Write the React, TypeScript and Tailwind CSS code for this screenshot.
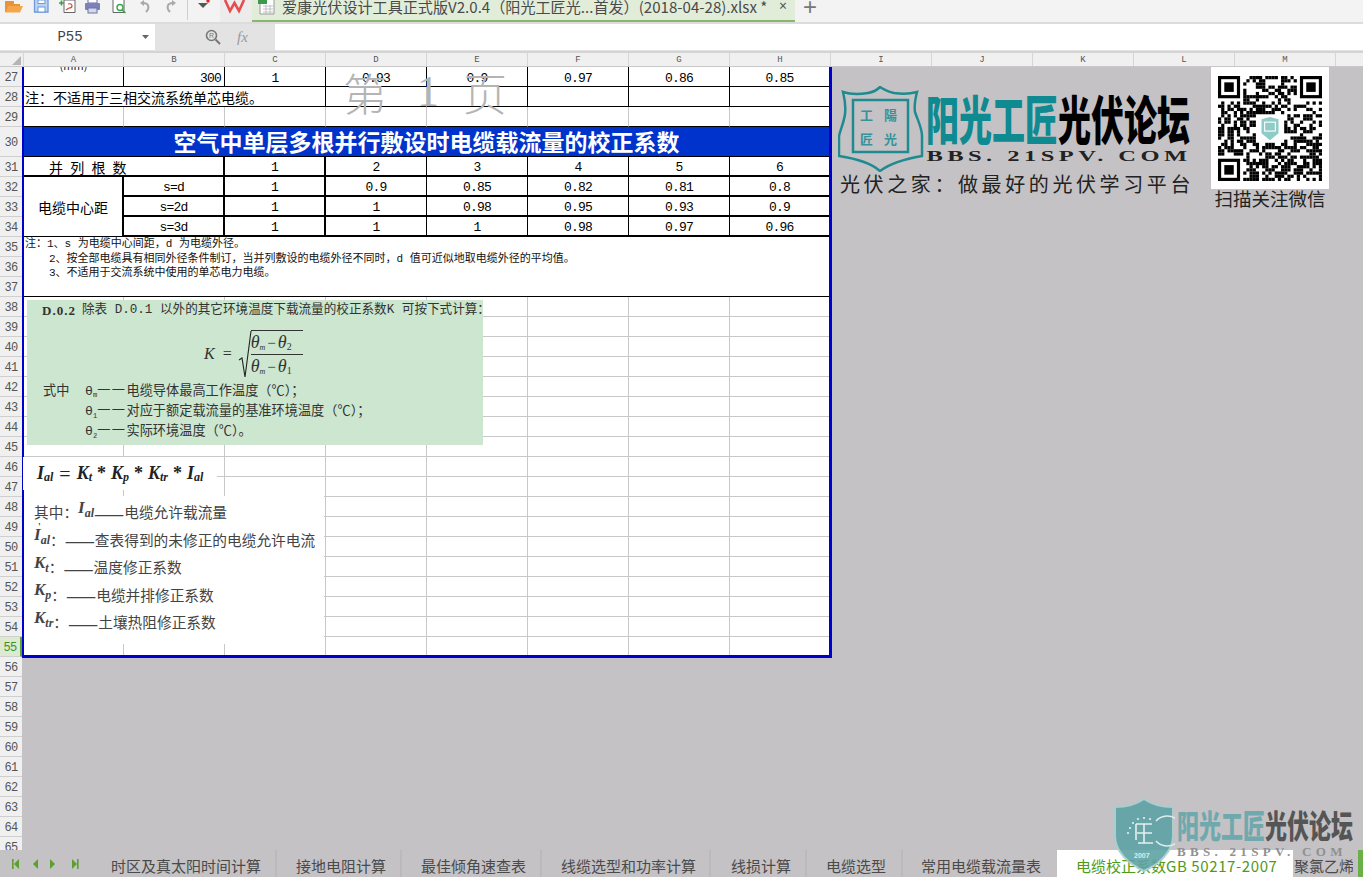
import React from "react";

const cjk = "font-['Noto_Sans_CJK_SC','Noto_Sans',sans-serif]";
const mono = "font-['Liberation_Mono','Noto_Sans_CJK_SC',monospace]";
const serif = "font-['Liberation_Serif','Noto_Sans_CJK_SC',serif]";

const colHeads = ["A", "B", "C", "D", "E", "F", "G", "H", "I", "J", "K", "L", "M", ""];
const rowHeads: number[] = [];
for (let i = 27; i <= 65; i++) rowHeads.push(i);

function QR() {
  const n = 33;
  const rects: React.ReactNode[] = [];
  let seed = 20180428;
  const rnd = () => {
    seed = (seed * 1664525 + 1013904223) >>> 0;
    return (seed >>> 16) / 65536;
  };
  const inFinder = (x: number, y: number) =>
    (x < 8 && y < 8) || (x >= n - 8 && y < 8) || (x < 8 && y >= n - 8);
  for (let y = 0; y < n; y++) {
    for (let x = 0; x < n; x++) {
      if (inFinder(x, y)) continue;
      if (x >= 12 && x <= 20 && y >= 12 && y <= 20) continue;
      if (rnd() > 0.47) rects.push(<rect key={x + "-" + y} x={x} y={y} width="1.02" height="1.02" fill="#000" />);
    }
  }
  const finder = (x: number, y: number) => (
    <g key={"f" + x + y}>
      <rect x={x} y={y} width="7" height="7" fill="#000" />
      <rect x={x + 1} y={y + 1} width="5" height="5" fill="#fff" />
      <rect x={x + 2} y={y + 2} width="3" height="3" fill="#000" />
    </g>
  );
  return (
    <svg width="104" height="105" viewBox="0 0 33 33" preserveAspectRatio="none">
      {rects}
      {finder(0, 0)}
      {finder(26, 0)}
      {finder(0, 26)}
      <path d="M13.8 13.6 L16.5 12.9 L19.2 13.6 L19.2 18 L16.5 20.2 L13.8 18 Z" fill="#8fcbc7" />
      <rect x="14.8" y="14.5" width="3.4" height="2.8" fill="none" stroke="#fff" strokeWidth="0.35" />
    </svg>
  );
}

function ShieldLogo() {
  return (
    <svg width="86" height="86" viewBox="0 0 86 86">
      <path d="M5 6 C14 9 24 8 30 7 C36 6 40 3 42 1 C45 3 50 6 56 7 C63 8 72 8 79 6 C77 14 76 20 77 26 C80 35 84 42 84 50 L84 70 C72 72 54 76 42 85 C32 76 14 72 1 70 L1 50 C3 42 6 36 7 28 C8 20 7 14 5 6 Z" fill="none" stroke="#1f8b90" strokeWidth="2.5" />
      <path d="M15 14 L70 14 L70 66 L15 66 Z" fill="none" stroke="#1f8b90" strokeWidth="2.5" />
      <text x="22" y="34" fontSize="13" fontWeight="700" fill="#35949a" fontFamily="Noto Sans CJK SC">工</text>
      <text x="46" y="34" fontSize="13" fontWeight="700" fill="#35949a" fontFamily="Noto Sans CJK SC">陽</text>
      <text x="22" y="58" fontSize="13" fontWeight="700" fill="#35949a" fontFamily="Noto Sans CJK SC">匠</text>
      <text x="46" y="58" fontSize="13" fontWeight="700" fill="#35949a" fontFamily="Noto Sans CJK SC">光</text>
    </svg>
  );
}

function WaterShield() {
  return (
    <svg width="62" height="74" viewBox="0 0 62 74">
      <path d="M31 1 C38 6 48 9 60 9 L60 38 C60 54 46 66 31 73 C16 66 2 54 2 38 L2 9 C14 9 24 6 31 1 Z" fill="#5fa2a5" stroke="#a8cfd0" strokeWidth="2" />
      <path d="M43 23 A15 15 0 1 1 43 43" fill="none" stroke="#e2f2f2" strokeWidth="1.6" />
      <path d="M23 26 H39 M23 26 V42 M31 26 V45 M24 35 H39 M25 45 H40" fill="none" stroke="#e8f5f5" strokeWidth="1.6" />
      <circle cx="17" cy="30" r="1.1" fill="#e8f5f5" />
      <circle cx="15" cy="35" r="1.1" fill="#e8f5f5" />
      <circle cx="20" cy="25" r="1.1" fill="#e8f5f5" />
      <circle cx="25" cy="21" r="1.1" fill="#e8f5f5" />
      <circle cx="31" cy="20" r="1.1" fill="#e8f5f5" />
      <circle cx="37" cy="21" r="1.1" fill="#e8f5f5" />
      <text x="21" y="60" fontSize="7" fontWeight="700" fill="#d8ecec" fontFamily="Liberation Sans">2007</text>
    </svg>
  );
}

function Toolbar() {
  return (
    <div className="h-[24px] flex bg-[#f3f3f3] border-b-2 border-[#dcdcdc] overflow-hidden relative">
      <div className="w-[252px] flex items-start shrink-0">
        <svg width="252" height="22" viewBox="0 0 252 22">
          <path d="M5 1 H14 V4 H20 V6 H9 L7 12 H5 Z" fill="#e8923a" />
          <path d="M8 6 H23 L20 12.5 H5.5 Z" fill="#f5a54a" />
          <path d="M34.5 -1 H48 V12 H34.5 Z" fill="#bcd3f2" stroke="#6e9bdc" strokeWidth="1.3" />
          <rect x="38" y="0" width="7" height="3.5" fill="#fff" stroke="#6e9bdc" />
          <rect x="38" y="7" width="7" height="5" fill="#fff" stroke="#6e9bdc" />
          <path d="M64 0 H75 V12.5 H64 Z" fill="#fff" stroke="#666" />
          <path d="M59 3 H64 M61.5 0.5 V5.5" stroke="#38a04a" strokeWidth="1.6" />
          <path d="M68 4 Q72 3 72 6 Q72 8 69 8 M66 10 L69 8" fill="none" stroke="#d9453c" strokeWidth="1.2" />
          <rect x="88" y="-2" width="9" height="5" fill="#fff" stroke="#6d73a8" />
          <rect x="85" y="3" width="15" height="7" rx="1" fill="#7c82b5" />
          <rect x="88" y="8" width="9" height="5" fill="#d5d8ea" stroke="#6d73a8" />
          <path d="M113 -1 H124 V12.5 H113 Z" fill="#fff" stroke="#666" />
          <circle cx="120" cy="7.5" r="3" fill="none" stroke="#3ba34a" strokeWidth="1.4" />
          <path d="M122 10 L125.5 13" stroke="#3ba34a" strokeWidth="1.6" />
          <path d="M140 3 L144 0 V6 Z" fill="#a9a9a9" />
          <path d="M143 3 C149 3 150 8 146 12" fill="none" stroke="#a9a9a9" strokeWidth="2" />
          <path d="M176 3 L172 0 V6 Z" fill="#a9a9a9" />
          <path d="M173 3 C167 3 166 8 170 12" fill="none" stroke="#a9a9a9" strokeWidth="2" />
          <rect x="187" y="0" width="1" height="20" fill="#cfcfcf" />
          <path d="M198 3 H208 L203 8 Z" fill="#555" />
          <circle cx="208" cy="1" r="1.7" fill="#e8242a" />
          <rect x="220" y="0" width="32" height="22" fill="#ececec" />
          <path d="M225 0 L230 11 L234.5 3 L239 11 L244 0" fill="none" stroke="#ea4a4e" strokeWidth="2.6" />
        </svg>
      </div>
      <div className="w-[543px] h-[22px] bg-[#e2edd9] border-b-[2px] border-[#8ab56e] flex items-start shrink-0">
        <svg width="30" height="20" viewBox="0 0 30 20" className="shrink-0">
          <path d="M8 -2 H22 V14 H8 Z" fill="#fff" stroke="#999" />
          <rect x="6" y="-2" width="9" height="6" fill="#3d9a4d" />
          <path d="M11 6 H21 M11 9 H21 M11 12 H21 M14 5 V14 M18 5 V14" stroke="#b5b5b5" strokeWidth="0.8" />
        </svg>
        <span className={`${cjk} text-[15.1px] leading-[12px] text-[#4a4a4a] whitespace-nowrap`}>
          爱康光伏设计工具正式版V2.0.4（阳光工匠光...首发）(2018-04-28).xlsx *
        </span>
        <span className="ml-auto mr-[8px] text-[14px] leading-[12px] text-[#555]">×</span>
      </div>
      <span className="ml-[8px] text-[#777] text-[24px] leading-[13px] font-['Liberation_Sans',sans-serif]">+</span>
    </div>
  );
}

function FormulaBar() {
  return (
    <div className="h-[29px] bg-[#e3e3e3] flex border-b-2 border-[#d4d4d4] pb-[1px]">
      <div className="w-[155px] bg-white flex items-center relative shrink-0">
        <span className={`${mono} text-[14px] text-[#444] w-[140px] text-center`}>P55</span>
        <svg width="8" height="5" viewBox="0 0 8 5" className="ml-[2px]">
          <path d="M0 0 H7 L3.5 4 Z" fill="#666" />
        </svg>
      </div>
      <div className="w-[120px] flex items-center shrink-0 pl-[50px]">
        <svg width="16" height="16" viewBox="0 0 16 16">
          <circle cx="6.5" cy="6.5" r="5" fill="none" stroke="#777" strokeWidth="1.6" />
          <path d="M10.5 10.5 L15 15" stroke="#777" strokeWidth="2" />
          <text x="4" y="9" fontSize="7" fill="#777" fontFamily="Liberation Sans">R</text>
        </svg>
        <span className={`${serif} italic text-[15px] text-[#9a9a9a] ml-[16px]`}>fx</span>
      </div>
      <div className="flex-1 bg-white" />
    </div>
  );
}

function RowHeads() {
  return (
    <div className="w-[22px] shrink-0 bg-[#f0f0f0] flex flex-col overflow-hidden">
      {rowHeads.map((n) => (
        <div
          key={n}
          className={
            n === 55
              ? `${mono} h-[20px] shrink-0 text-[12px] pt-[3px] tracking-[-0.6px] flex items-center justify-center bg-[#dcebd0] text-[#3f8f2a] border-r-2 border-[#58a52f] border-b border-b-[#cfcfcf]`
              : n === 30
              ? `${mono} h-[30px] shrink-0 text-[12px] pt-[3px] tracking-[-0.6px] flex items-center justify-center text-[#555] border-b border-[#cfcfcf]`
              : `${mono} h-[20px] shrink-0 text-[12px] pt-[3px] tracking-[-0.6px] flex items-center justify-center text-[#555] border-b border-[#cfcfcf]`
          }
        >
          {n}
        </div>
      ))}
    </div>
  );
}

const numCell = `${mono} text-[13px] tracking-[-0.8px] leading-none flex items-center justify-center text-black`;
const g = "border-r border-b border-[#c8c8c8]";

function EmptyRow({ last }: { last?: boolean }) {
  const cls = last ? "border-r border-[#c8c8c8]" : g;
  return (
    <>
      {[0, 1, 2, 3, 4, 5, 6].map((i) => (
        <div key={i} className={cls} />
      ))}
      <div className={last ? "" : "border-b border-[#c8c8c8]"} />
    </>
  );
}

function DataRow({ name, vals }: { name: string; vals: string[] }) {
  return (
    <>
      <div className={`${numCell} border-r-2 border-b-2 border-black pt-[3px]`}>{name}</div>
      {vals.map((v, i) => (
        <div
          key={i}
          className={
            i === 5
              ? `${numCell} border-b-2 border-black pt-[3px]`
              : i === 0
              ? `${numCell} border-r-2 border-b-2 border-black pt-[3px]`
              : `${numCell} border-r border-b-2 border-black pt-[3px]`
          }
        >
          {v}
        </div>
      ))}
    </>
  );
}

function Page() {
  return (
    <div className="w-[810px] h-[591px] shrink-0 bg-white border-l-2 border-r-[3px] border-b-[3px] border-[#0000cc] grid grid-cols-[100px_101px_101px_101px_101px_101px_101px_99px] grid-rows-[20px_20px_20px_30px_repeat(24,20px)_18px] overflow-hidden">
      {/* 27 */}
      <div className="border-r border-b border-black overflow-hidden flex justify-center">
        <span className={`${cjk} text-[11px] leading-[10px] -mt-[7px] text-[#222]`}>(mm)</span>
      </div>
      <div className={`${numCell} justify-end pr-[3px] border-r border-b border-black pt-[3px]`}>300</div>
      {["1", "0.93", "0.9", "0.97", "0.86"].map((v) => (
        <div key={v} className={`${numCell} border-r border-b border-black pt-[3px]`}>{v}</div>
      ))}
      <div className={`${numCell} border-b border-black pt-[3px]`}>0.85</div>
      {/* 28 */}
      <div className={`${cjk} col-span-3 text-[14px] leading-none text-black border-r border-b border-black flex items-center pl-[1px] whitespace-nowrap`}>
        注：不适用于三相交流系统单芯电缆。
      </div>
      <div className="border-r border-b border-r-[#c8c8c8] border-b-black" />
      <div className="border-r border-b border-black" />
      <div className="border-r border-b border-black" />
      <div className="border-r border-b border-black" />
      <div className="border-b border-black" />
      {/* 29 */}
      {[0, 1, 2, 3, 4, 5, 6].map((i) => (
        <div key={i} className="border-r border-r-[#c8c8c8] border-b border-b-black" />
      ))}
      <div className="border-b border-black" />
      {/* 30 */}
      <div className={`${cjk} col-span-8 bg-[#0033cc] border-b border-black text-white font-semibold text-[23px] leading-none flex items-center justify-center whitespace-nowrap`}>
        空气中单层多根并行敷设时电缆载流量的校正系数
      </div>
      {/* 31 */}
      <div className={`${cjk} col-span-2 border-r-2 border-b-2 border-black text-[14px] leading-none text-black flex items-center pl-[25px] tracking-[7.2px] whitespace-nowrap pt-[2px]`}>
        并列根数
      </div>
      {["1", "2", "3", "4", "5"].map((v, i) => (
        <div key={v} className={i === 0 ? `${numCell} border-r-2 border-b-2 border-black pt-[3px]` : `${numCell} border-r border-b-2 border-black pt-[3px]`}>{v}</div>
      ))}
      <div className={`${numCell} border-b-2 border-black pt-[3px]`}>6</div>
      {/* 32-34 */}
      <div className={`${cjk} row-span-3 border-r-2 border-b border-black text-[14px] leading-none text-black flex items-center justify-center`}>
        电缆中心距
      </div>
      <DataRow name="s=d" vals={["1", "0.9", "0.85", "0.82", "0.81", "0.8"]} />
      <DataRow name="s=2d" vals={["1", "1", "0.98", "0.95", "0.93", "0.9"]} />
      <DataRow name="s=3d" vals={["1", "1", "1", "0.98", "0.97", "0.96"]} />
      {/* 35-37 */}
      <div className={`${mono} col-span-8 row-span-3 border-b border-black text-[11px] leading-[14.5px] text-[#111] pl-[1px] whitespace-nowrap`}>
        <p>注：1、s 为电缆中心间距，d 为电缆外径。</p>
        <p className="pl-[24px]">2、按全部电缆具有相同外径条件制订，当并列敷设的电缆外径不同时，d 值可近似地取电缆外径的平均值。</p>
        <p className="pl-[24px]">3、不适用于交流系统中使用的单芯电力电缆。</p>
      </div>
      {/* 38-54 */}
      {Array.from({ length: 17 }).map((_, i) => (
        <EmptyRow key={i} />
      ))}
      <EmptyRow last />
    </div>
  );
}

function GreenNote() {
  return (
    <div className={`${mono} absolute left-[5px] top-[233px] w-[456px] h-[145px] bg-[#cce6cf] text-[13.2px] leading-none text-[#333] flex flex-col whitespace-nowrap`}>
      <div className="flex items-center pl-[15px] h-[20px] pt-[1px]">
        <span className={`${serif} font-bold text-[13px] tracking-[1px] mr-[6px]`}>D.0.2</span>
        <span className="text-[12.6px]">除表 D.0.1 以外的其它环境温度下载流量的校正系数K 可按下式计算：</span>
      </div>
      <div className="h-[56px] mt-[6px] flex items-center pl-[177px]">
        <span className={`${serif} italic text-[16px] mr-[8px]`}>K</span>
        <span className={`${serif} text-[16px] mr-[6px]`}>=</span>
        <svg width="14" height="48" viewBox="0 0 14 48" className="shrink-0">
          <path d="M1 30 L4 28 L7 47 L13 1" fill="none" stroke="#222" strokeWidth="1.1" />
        </svg>
        <div className={`${serif} italic text-[18px] leading-[22px] border-t border-[#333] -mt-[1px] -ml-[1px] w-[52px]`}>
          <div className="border-b border-[#333] h-[24px] whitespace-nowrap">θ<sub className="text-[8px] leading-none">m</sub><span className="not-italic mx-[2px] text-[15px]">−</span>θ<sub className="text-[10px] not-italic leading-none">2</sub></div>
          <div className="whitespace-nowrap">θ<sub className="text-[8px] leading-none">m</sub><span className="not-italic mx-[2px] text-[15px]">−</span>θ<sub className="text-[10px] not-italic leading-none">1</sub></div>
        </div>
      </div>
      <div className="flex h-[20px] items-center">
        <span className="w-[58px] pl-[16px] shrink-0">式中</span>
        <span>θ<sub className="text-[7px] leading-none">m</sub><span className="tracking-[1.5px]">一一</span>电缆导体最高工作温度（℃）；</span>
      </div>
      <div className="pl-[58px] h-[20px] flex items-center">θ<sub className="text-[7px] leading-none mt-[5px]">1</sub><span className="tracking-[1.5px]">一一</span>对应于额定载流量的基准环境温度（℃）；</div>
      <div className="pl-[58px] h-[20px] flex items-center">θ<sub className="text-[7px] leading-none mt-[5px]">2</sub><span className="tracking-[1.5px]">一一</span>实际环境温度（℃）。</div>
    </div>
  );
}

function Sym({ a, b, prime }: { a: string; b: string; prime?: boolean }) {
  return (
    <span className={`${serif} italic font-bold text-[17px] inline-flex items-start leading-none -translate-y-[4px] relative`}>
      {a}
      <sub className="text-[12px] leading-none mt-[8px] static">{b}</sub>
      {prime && <span className="absolute left-[4px] -top-[4px] text-[10px] not-italic">'</span>}
    </span>
  );
}

const dash = "text-[18px] leading-none";

function CableNote() {
  return (
    <>
      <div className={`${serif} absolute left-[1px] top-[390px] w-[194px] h-[33px] bg-white flex items-center pl-[14px] italic font-bold text-[18px] text-[#222] whitespace-nowrap`}>
        I<sub className="text-[12px] leading-none">al</sub>
        <span className="not-italic font-normal mx-[6px] text-[20px]">=</span>
        K<sub className="text-[12px] leading-none">t</sub>
        <span className="not-italic mx-[5px]">*</span>
        K<sub className="text-[12px] leading-none">p</sub>
        <span className="not-italic mx-[5px]">*</span>
        K<sub className="text-[12px] leading-none">tr</sub>
        <span className="not-italic mx-[5px]">*</span>
        I<sub className="text-[12px] leading-none">al</sub>
      </div>
      <div className={`${cjk} absolute left-[2px] top-[429px] w-[300px] h-[148px] bg-white text-[14.7px] text-[#444] pl-[10px] pt-[3px] flex flex-col whitespace-nowrap leading-none`}>
        <div className="h-[27.5px] flex items-center">其中：<Sym a="I" b="al" /><span className={dash}>——</span>电缆允许载流量</div>
        <div className="h-[27.5px] flex items-center"><Sym a="I" b="al" prime />：<span className={dash}>——</span>查表得到的未修正的电缆允许电流</div>
        <div className="h-[27.5px] flex items-center"><Sym a="K" b="t" />：<span className={dash}>——</span>温度修正系数</div>
        <div className="h-[27.5px] flex items-center"><Sym a="K" b="p" />：<span className={dash}>——</span>电缆并排修正系数</div>
        <div className="h-[27.5px] flex items-center"><Sym a="K" b="tr" />：<span className={dash}>——</span>土壤热阻修正系数</div>
      </div>
    </>
  );
}

function ForumLogo() {
  return (
    <>
      <div className="absolute left-[816px] top-[19px]">
        <ShieldLogo />
      </div>
      <div className={`${cjk} absolute left-[904px] top-[25px] h-[52px] flex items-center font-black text-[33px] leading-none scale-y-[1.6] origin-center whitespace-nowrap`}>
        <span className="text-[#0f8a90]">阳光工匠</span>
        <span className="text-black">光伏论坛</span>
      </div>
      <div className={`${serif} absolute left-[904px] top-[81px] w-[266px] text-center font-bold text-[17px] leading-[17px] tracking-[3.1px] text-[#222] scale-x-[1.44] scale-y-[0.85] whitespace-nowrap`}>
        BBS. 21SPV. COM
      </div>
      <div className={`${cjk} absolute left-[818px] top-[105px] text-[20px] leading-[24px] tracking-[3.6px] text-[#222] whitespace-nowrap`}>
        光伏之家：做最好的光伏学习平台
      </div>
      <div className="absolute left-[1189px] top-0 w-[118px] h-[122px] bg-white flex items-center justify-center">
        <QR />
      </div>
      <div className={`${cjk} absolute left-[1189px] top-[119px] w-[118px] text-center text-[18.5px] leading-[24px] text-[#222] whitespace-nowrap`}>
        扫描关注微信
      </div>
    </>
  );
}

function Watermark() {
  return (
    <div className="absolute left-[1113px] top-[798px] z-10 flex items-start pointer-events-none">
      <div className="opacity-90"><WaterShield /></div>
      <div className="ml-[2px]">
        <div className={`${cjk} font-black text-[22px] leading-[22px] mt-[10px] h-[32px] whitespace-nowrap scale-y-[1.45] origin-top`}>
          <span className="text-[#6fa9ad]">阳光工匠</span>
          <span className="text-[#555]">光伏论坛</span>
        </div>
        <div className={`${serif} font-bold text-[13px] leading-[12px] mt-[6px] tracking-[4.3px] text-[#8f9092] whitespace-nowrap`}>BBS. 21SPV. COM</div>
      </div>
    </div>
  );
}

const tabs: [string, string][] = [
  ["时区及真太阳时间计算", "w-[185px] pl-[19px] border-r-2 border-[#bababa]"],
  ["接地电阻计算", "w-[125px] pl-[19px] border-r-2 border-[#bababa]"],
  ["最佳倾角速查表", "w-[140px] pl-[19px] border-r-2 border-[#bababa]"],
  ["线缆选型和功率计算", "w-[169px] pl-[19px] border-r-2 border-[#bababa]"],
  ["线损计算", "w-[96px] pl-[20px] border-r-2 border-[#bababa]"],
  ["电缆选型", "w-[96px] pl-[19px] border-r-2 border-[#bababa]"],
  ["常用电缆载流量表", "w-[154px] pl-[18px]"],
];

function TabBar() {
  return (
    <div className="absolute left-0 top-[850px] w-[1363px] h-[27px] bg-[#c4c2c5] flex items-stretch overflow-hidden">
      <div className="w-[92px] shrink-0 flex items-center pl-[11px] pt-[1px]">
        <svg width="70" height="12" viewBox="0 0 70 12">
          <rect x="1" y="1" width="1.6" height="10" fill="#5aa02c" />
          <path d="M8 1 V11 L3 6 Z" fill="#5aa02c" />
          <path d="M27 1 V11 L22 6 Z" fill="#5aa02c" />
          <path d="M39 1 V11 L44 6 Z" fill="#5aa02c" />
          <path d="M61 1 V11 L66 6 Z" fill="#5aa02c" />
          <rect x="66" y="1" width="1.6" height="10" fill="#5aa02c" />
        </svg>
      </div>
      {tabs.map(([t, c]) => (
        <div key={t} className={`${cjk} ${c} shrink-0 text-[15px] text-[#4a4a4a] flex items-center pt-[3px] whitespace-nowrap leading-none`}>{t}</div>
      ))}
      <div className={`${cjk} w-[236px] shrink-0 bg-white text-[15px] text-[#4f9a16] flex items-center pl-[19px] pt-[3px] leading-none whitespace-nowrap`}>
        电缆校正系数<span className="tracking-[0.6px]">GB 50217-2007</span>
      </div>
      <div className={`${cjk} w-[60px] shrink-0 overflow-hidden text-[15px] text-[#4a4a4a] flex items-center pl-[1px] pt-[3px] leading-none whitespace-nowrap`}>聚氯乙烯</div>
      <div className="w-[5px] ml-auto bg-[#6ab04a]" />
    </div>
  );
}

export default function App() {
  return (
    <div className="w-[1363px] h-[877px] relative overflow-hidden bg-[#c4c2c5] flex flex-col">
      <Toolbar />
      <FormulaBar />
      <div className="h-[14px] flex bg-[#f0f0f0] border-b border-[#c8c8c8] shrink-0">
        <div className="w-[24px] shrink-0 border-r border-[#d5d5d5] flex items-end justify-end pr-[2px] pb-[1px]">
          <svg width="9" height="9" viewBox="0 0 9 9"><path d="M9 0 V9 H0 Z" fill="#b5b5b5" /></svg>
        </div>
        {colHeads.map((c, i) => (
          <div
            key={i}
            className={
              i === 0
                ? `${mono} w-[100px] shrink-0 text-[9px] leading-[14px] text-center text-[#555] border-r border-[#d5d5d5]`
                : `${mono} w-[101px] shrink-0 text-[9px] leading-[14px] text-center text-[#555] border-r border-[#d5d5d5]`
            }
          >
            {c}
          </div>
        ))}
      </div>
      <div className="h-[783px] flex overflow-hidden">
        <RowHeads />
        <div className="flex-1 relative">
          <Page />
          <div className={`${cjk} absolute left-[321px] top-[0px] h-[50px] flex items-center font-light text-[44px] leading-none text-[#b4b4b4] whitespace-nowrap`}>
            <span>第</span>
            <span className={`${serif} ml-[30px] mr-[24px]`}>1</span>
            <span>页</span>
          </div>
          <GreenNote />
          <CableNote />
          <ForumLogo />
        </div>
      </div>
      <TabBar />
      <Watermark />
    </div>
  );
}
